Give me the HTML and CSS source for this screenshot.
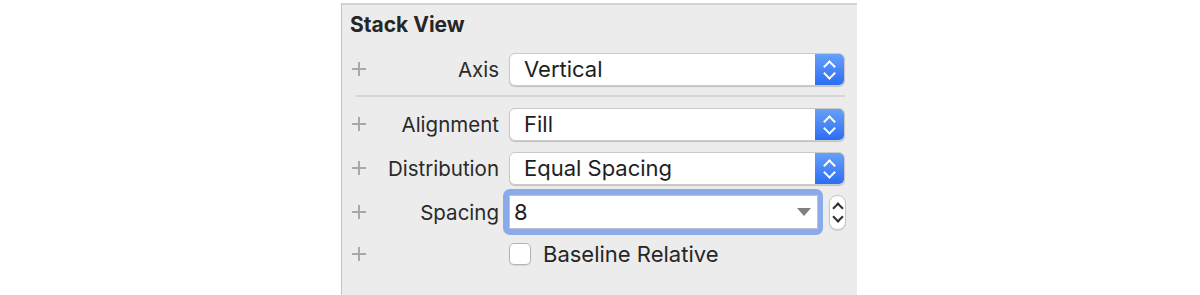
FILE: index.html
```html
<!DOCTYPE html>
<html lang="en">
<head>
    <meta charset="UTF-8">
    <title>Stack View Inspector</title>
    <link rel="stylesheet" href="styles.css">
</head>
<body>
    <div class="inspector">
        <div class="top-rule"></div>
        <h2 class="section-title">Stack View</h2>

        <div class="row">
            <span class="plus"></span>
            <label class="label">Axis</label>
            <div class="popup">
                <span class="popup-value">Vertical</span>
                <span class="popup-arrows"></span>
            </div>
        </div>

        <div class="separator"></div>

        <div class="row">
            <span class="plus"></span>
            <label class="label">Alignment</label>
            <div class="popup">
                <span class="popup-value">Fill</span>
                <span class="popup-arrows"></span>
            </div>
        </div>

        <div class="row">
            <span class="plus"></span>
            <label class="label">Distribution</label>
            <div class="popup">
                <span class="popup-value">Equal Spacing</span>
                <span class="popup-arrows"></span>
            </div>
        </div>

        <div class="row">
            <span class="plus"></span>
            <label class="label">Spacing</label>
            <div class="combo">
                <div class="combo-field">
                    <span class="combo-value">8</span>
                    <span class="combo-caret"></span>
                </div>
            </div>
            <span class="stepper"></span>
        </div>

        <div class="row row-check">
            <span class="plus"></span>
            <label class="label"></label>
            <span class="checkbox"></span>
            <span class="check-label">Baseline Relative</span>
        </div>
    </div>
</body>
</html>
```

FILE: styles.css
```css
body {
    margin: 0;
    background: #fff;
    font-family: Inter, "Liberation Sans", sans-serif;
    color: #262626;
}

.inspector {
    margin-left: 341px;
    width: 516px;
    height: 295px;
    background: #ececec;
    border-left: 1px solid #c4c4c4;
    box-sizing: border-box;
}
.top-rule {
    height: 2px;
    margin-top: 3px;
    background: #d4d4d4;
}
.section-title {
    margin: 0 0 7px;
    padding: 5px 0 0 8px;
    height: 30px;
    line-height: 30px;
    font-size: 21px;
    font-weight: 700;
    color: #262626;
}

/* rows */
.row {
    display: flex;
    align-items: center;
    height: 44px;
}
.row-check {
    height: 40px;
}
.plus {
    position: relative;
    width: 14px;
    height: 14px;
    margin: 0 9px 0 10px;
}
.plus::before,
.plus::after {
    content: "";
    position: absolute;
    background: #a8a8a8;
}
.plus::before {
    left: 0;
    right: 0;
    top: 6px;
    height: 1.5px;
}
.plus::after {
    top: 0;
    bottom: 0;
    left: 6px;
    width: 1.5px;
}
.label {
    width: 124px;
    margin-right: 10px;
    text-align: right;
    font-size: 20.5px;
    color: #2a2a2a;
}
.separator {
    height: 2px;
    margin: 4px 12px 5px 14px;
    background: #d6d6d6;
}

/* popup button */
.popup {
    display: flex;
    width: 336px;
    height: 33px;
    box-sizing: border-box;
    background: #fff;
    border: 1px solid #cacaca;
    border-radius: 6px;
    box-shadow: 0 1px 1px rgba(0, 0, 0, 0.18);
    overflow: hidden;
}
.popup-value {
    flex: 1;
    padding-left: 14px;
    line-height: 31px;
    font-size: 22px;
    color: #1e1e1e;
}
.popup-arrows {
    position: relative;
    width: 29px;
    background: linear-gradient(#67a0f8, #2c6ef4);
}
.popup-arrows::before,
.popup-arrows::after {
    content: "";
    position: absolute;
    left: 10px;
    width: 7px;
    height: 7px;
    border-left: 2.5px solid #fff;
    border-top: 2.5px solid #fff;
}
.popup-arrows::before {
    top: 8px;
    transform: rotate(45deg);
}
.popup-arrows::after {
    top: 15px;
    transform: rotate(225deg);
}

/* combo box with focus ring */
.combo {
    width: 320px;
    height: 46px;
    margin-left: -6px;
    padding: 6px 5px 6px 6px;
    box-sizing: border-box;
    background: #8aaaea;
    border-radius: 7px;
}
.combo-field {
    display: flex;
    align-items: center;
    height: 100%;
    box-sizing: border-box;
    background: #fff;
    border: 1px solid #b8c4dc;
}
.combo-value {
    flex: 1;
    padding-left: 4px;
    font-size: 22px;
    color: #1e1e1e;
}
.combo-caret {
    width: 0;
    height: 0;
    margin-right: 6px;
    border-left: 7px solid transparent;
    border-right: 7px solid transparent;
    border-top: 8px solid #808080;
}
.stepper {
    position: relative;
    width: 17px;
    height: 35px;
    margin-left: 6px;
    background: #fff;
    border: 1px solid #c6c6c6;
    border-radius: 8px;
    box-sizing: border-box;
    box-shadow: 0 1px 1px rgba(0, 0, 0, 0.1);
}
.stepper::before,
.stepper::after {
    content: "";
    position: absolute;
    left: 4px;
    width: 6px;
    height: 6px;
    border-left: 2px solid #2e2e2e;
    border-top: 2px solid #2e2e2e;
}
.stepper::before {
    top: 8px;
    transform: rotate(45deg);
}
.stepper::after {
    top: 17px;
    transform: rotate(225deg);
}

/* checkbox */
.checkbox {
    width: 22px;
    height: 22px;
    box-sizing: border-box;
    background: #fff;
    border: 1px solid #b4b4b4;
    border-radius: 5px;
    box-shadow: 0 1px 1px rgba(0, 0, 0, 0.08);
}
.check-label {
    margin-left: 12px;
    font-size: 22px;
    color: #262626;
}
```
